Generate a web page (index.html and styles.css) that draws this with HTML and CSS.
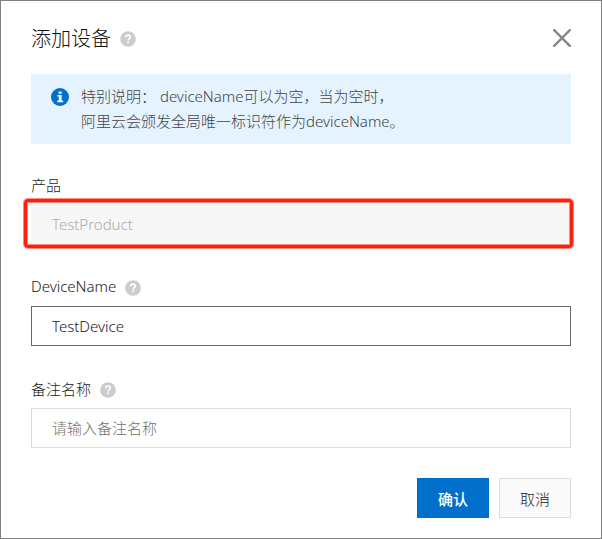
FILE: index.html
```html
<!DOCTYPE html>
<html lang="zh-CN">
<head>
    <meta charset="UTF-8">
    <meta name="viewport" content="width=device-width, initial-scale=1.0">
    <title>添加设备</title>
    <link rel="stylesheet" href="styles.css">
</head>
<body>
    <svg class="sprite" aria-hidden="true">
        <symbol id="icon-help" viewBox="0 0 16 16">
            <circle cx="8" cy="8" r="7.8" fill="#ccc"/>
            <path d="M5.7 6.3C5.7 4.9 6.7 4.1 8 4.1s2.3.8 2.3 2c0 1.6-2.1 1.6-2.1 3.3" fill="none" stroke="#fff" stroke-width="1.6"/>
            <rect x="7.3" y="10.4" width="1.8" height="1.8" fill="#fff"/>
        </symbol>
    </svg>

    <div class="dialog" role="dialog" aria-labelledby="dialog-title">
        <div class="dialog-header">
            <h1 id="dialog-title">添加设备</h1>
            <svg class="help"><use href="#icon-help"/></svg>
            <button type="button" class="close-btn" aria-label="关闭">
                <svg viewBox="0 0 18 18"><path d="M1.2 1.2l15.6 15.6M16.8 1.2L1.2 16.8" stroke="#888" stroke-width="2.4" stroke-linecap="round"/></svg>
            </button>
        </div>

        <div class="notice">
            <svg class="notice-icon" viewBox="0 0 18 18">
                <circle cx="9" cy="9" r="9" fill="#0070cc"/>
                <path d="M7.6 3.4h3v2.3h-3zM6.4 7h4.2v5.6h1.5v1.7H6.3v-1.7h1.5V8.6H6.4z" fill="#fff"/>
            </svg>
            <p>特别说明： deviceName可以为空，当为空时，<br>阿里云会颁发全局唯一标识符作为deviceName。</p>
        </div>

        <form>
            <div class="form-group">
                <div class="form-label">
                    <label for="product">产品</label>
                </div>
                <div class="form-control highlight">
                    <input type="text" id="product" value="TestProduct" disabled>
                </div>
            </div>

            <div class="form-group">
                <div class="form-label">
                    <label for="device-name">DeviceName</label>
                    <svg class="help"><use href="#icon-help"/></svg>
                </div>
                <div class="form-control">
                    <input type="text" id="device-name" class="active" value="TestDevice">
                </div>
            </div>

            <div class="form-group">
                <div class="form-label">
                    <label for="nickname">备注名称</label>
                    <svg class="help"><use href="#icon-help"/></svg>
                </div>
                <div class="form-control">
                    <input type="text" id="nickname" placeholder="请输入备注名称">
                </div>
            </div>

            <div class="dialog-footer">
                <button type="submit" class="btn btn-primary">确认</button>
                <button type="button" class="btn">取消</button>
            </div>
        </form>
    </div>
</body>
</html>
```

FILE: styles.css
```css
:root {
    --primary: #0070cc;
    --text: #222;
    --border: #ddd;
}

* {
    box-sizing: border-box;
    margin: 0;
    padding: 0;
}

body,
input,
button {
    font-family: "Noto Sans", "Noto Sans CJK SC", sans-serif;
    font-size: 15px;
    font-weight: 300;
    color: var(--text);
}

.sprite {
    display: none;
}

.dialog {
    min-height: 100vh;
    padding: 20px 30px;
    background: #fff;
    border: 1px solid #808080;
}

.dialog-header {
    display: flex;
    align-items: center;
    height: 33px;
    margin-bottom: 20px;
}

.dialog-header h1 {
    font-size: 20px;
    font-weight: 300;
    color: #111;
}

.help {
    width: 16px;
    height: 16px;
    margin: 3px 0 0 9px;
}

.close-btn {
    width: 18px;
    height: 18px;
    margin-left: auto;
    border: none;
    background: none;
    cursor: pointer;
}

.close-btn svg {
    display: block;
    width: 18px;
    height: 18px;
}

.notice {
    display: flex;
    gap: 12px;
    padding: 10px 20px;
    margin-bottom: 28px;
    background: #e4f3fe;
}

.notice-icon {
    flex: none;
    width: 18px;
    height: 18px;
    margin-top: 4px;
}

.notice p {
    line-height: 25px;
    color: #444;
}

.form-group {
    margin-bottom: 30px;
}

.form-label {
    display: flex;
    align-items: center;
    height: 24px;
    margin-bottom: 8px;
}

.form-control {
    position: relative;
}

.form-control input {
    display: block;
    width: 100%;
    height: 40px;
    padding: 0 20px;
    border: 1px solid var(--border);
    background: #fff;
}

.form-control input.active {
    border-color: #666;
}

.form-control input:disabled {
    border-color: #f7f7f7;
    background: #f7f7f7;
    color: #aaa;
}

.form-control input::placeholder {
    color: #707070;
}

/* Red frame around the field */
.highlight::after {
    content: "";
    position: absolute;
    inset: -5px -2px -4px -7px;
    border: 3px solid #ff1f0f;
    border-radius: 4px;
    box-shadow: 0 0 0 1px #ff8a80, inset 0 0 0 1px #ff8a80;
    pointer-events: none;
}

.dialog-footer {
    display: flex;
    justify-content: flex-end;
    gap: 10px;
}

.btn {
    height: 40px;
    padding: 0 20px;
    border: 1px solid var(--border);
    background: #fafafa;
    cursor: pointer;
}

.btn-primary {
    border-color: var(--primary);
    background: var(--primary);
    color: #fff;
    font-weight: 500;
}
```
